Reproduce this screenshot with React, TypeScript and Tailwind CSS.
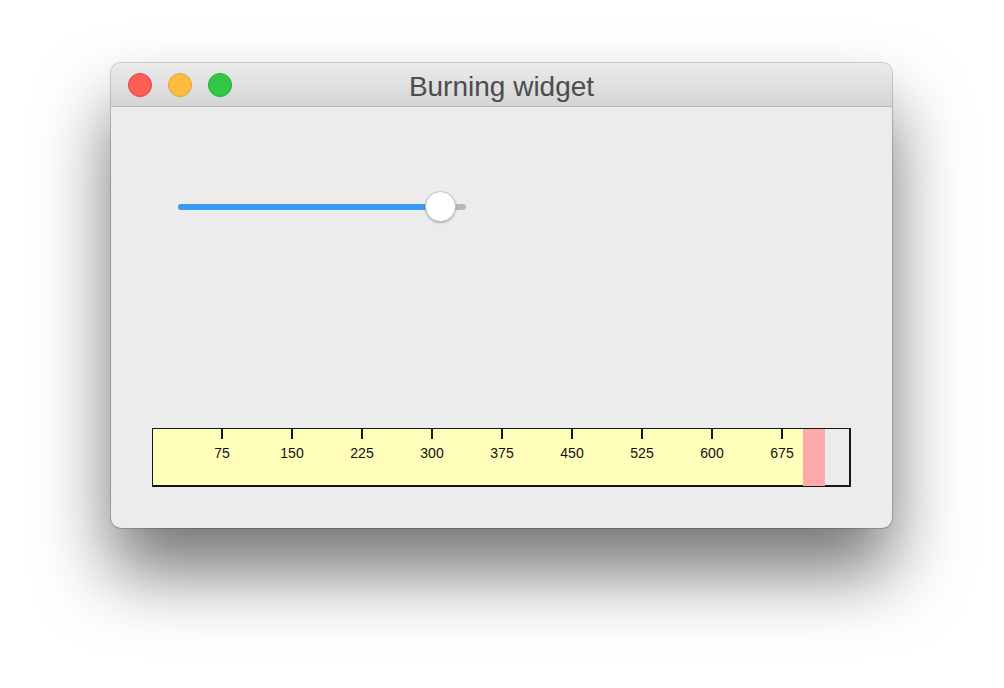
import React from 'react';

const ticks = [75, 150, 225, 300, 375, 450, 525, 600, 675];

const TrafficLights: React.FC = () => (
  <div className="flex items-center gap-[16px] pl-[17px]">
    <div className="w-[24px] h-[24px] rounded-full bg-[#fd5f57] border border-[#e0443e]" />
    <div className="w-[24px] h-[24px] rounded-full bg-[#fdbc3f] border border-[#dea236]" />
    <div className="w-[24px] h-[24px] rounded-full bg-[#33c748] border border-[#27aa35]" />
  </div>
);

const Slider: React.FC = () => (
  <div className="relative w-[288px] h-[32px] flex items-center">
    <div className="w-full h-[6px] rounded-full bg-[#b8b8b8] flex">
      <div className="w-[264px] h-full rounded-full bg-[#3c99f6]" />
    </div>
    <div className="absolute left-[247px] top-0 w-[31px] h-[31px] rounded-full bg-white border border-[#c4c4c4] shadow-[0_1px_2px_rgba(0,0,0,0.25)]" />
  </div>
);

const BurnWidget: React.FC = () => (
  <div className="w-[699px] h-[59px] border-t border-l border-r-2 border-b-2 border-[#161616] bg-[#ececec] flex">
    <div className="w-[650px] h-full bg-[#ffffbb] flex">
      <div className="w-[34px] shrink-0" />
      {ticks.map((t) => (
        <div key={t} className="w-[70px] shrink-0 flex flex-col items-center">
          <div className="w-[2px] h-[10px] bg-[#161616]" />
          <div className="mt-[6px] text-[14px] leading-[16px] text-[#111] font-['Liberation_Sans',Arial,sans-serif]">
            {t}
          </div>
        </div>
      ))}
    </div>
    <div className="w-[22px] h-[57px] bg-[#ffaaaa]" />
  </div>
);

export default function App() {
  return (
    <div className="w-[1004px] h-[688px] bg-white overflow-hidden pt-[63px] pl-[111px]">
      <div className="w-[781px] h-[465px] rounded-[10px] bg-[#ececec] flex flex-col overflow-hidden shadow-[0_0_0_1px_rgba(0,0,0,0.18),0_44px_72px_rgba(0,0,0,0.55)]">
        <div className="relative h-[44px] shrink-0 flex items-center bg-gradient-to-b from-[#ebebeb] to-[#d5d5d5] border-b border-[#b6b6b6]">
          <TrafficLights />
          <div className="absolute inset-0 pt-[5px] flex items-center justify-center text-[28px] text-[#4c4c4c] font-['Liberation_Sans',Arial,sans-serif] pointer-events-none">
            Burning widget
          </div>
        </div>
        <div className="flex-1 flex flex-col">
          <div className="pl-[67px] pt-[84px]">
            <Slider />
          </div>
          <div className="pl-[41px] pt-[205px]">
            <BurnWidget />
          </div>
        </div>
      </div>
    </div>
  );
}
